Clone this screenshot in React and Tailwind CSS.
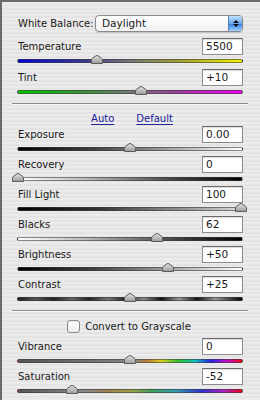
import React from "react";

const sliders1 = [
  { label: "Temperature", value: "5500", pos: 0.354, track: "bg-[linear-gradient(90deg,#0000d8_0%,#3a3a90_30%,#777_50%,#a0a030_72%,#f4f400_100%)]" },
  { label: "Tint", value: "+10", pos: 0.549, track: "bg-[linear-gradient(90deg,#00c800_0%,#3a903a_30%,#777_50%,#a03aa0_72%,#f400f4_100%)]" },
];

const sliders2 = [
  { label: "Exposure", value: "0.00", pos: 0.5, track: "bg-[linear-gradient(90deg,#000_0%,#444_35%,#bbb_75%,#fff_100%)]" },
  { label: "Recovery", value: "0", pos: 0.005, track: "bg-[linear-gradient(90deg,#fff_0%,#bbb_30%,#444_70%,#000_100%)]" },
  { label: "Fill Light", value: "100", pos: 0.99, track: "bg-[linear-gradient(90deg,#000_0%,#333_35%,#999_75%,#ddd_100%)]" },
  { label: "Blacks", value: "62", pos: 0.62, track: "bg-[linear-gradient(90deg,#fff_0%,#bbb_30%,#444_70%,#000_100%)]" },
  { label: "Brightness", value: "+50", pos: 0.668, track: "bg-[linear-gradient(90deg,#000_0%,#444_35%,#bbb_75%,#fff_100%)]" },
  { label: "Contrast", value: "+25", pos: 0.5, track: "bg-[linear-gradient(90deg,#222_0%,#555_8%,#222_16%,#666_24%,#222_32%,#777_40%,#222_48%,#888_56%,#111_64%,#999_72%,#111_80%,#999_88%,#000_100%)]" },
];

const sliders3 = [
  { label: "Vibrance", value: "0", pos: 0.5, track: "bg-[linear-gradient(90deg,#555_0%,#7a7a7a_40%,#888_52%,#c08030_58%,#d8d020_64%,#30c030_72%,#10c0c0_79%,#2020e0_86%,#c010d0_93%,#f00010_100%)]" },
  { label: "Saturation", value: "-52", pos: 0.243, track: "bg-[linear-gradient(90deg,#555_0%,#7a7a7a_20%,#888_30%,#a08050_40%,#a0a040_50%,#40a060_60%,#30a0b0_70%,#3030d0_82%,#b020c0_92%,#f00010_100%)]" },
];

function Thumb({ pos }) {
  const left = Math.round(pos * 226) - 6;
  return (
    <svg
      className="absolute top-[-4px]"
      style={{ left }}
      width="12"
      height="9"
      viewBox="0 0 12 9"
    >
      <defs>
        <linearGradient id="tg" x1="0" y1="0" x2="0" y2="1">
          <stop offset="0" stopColor="#e4e4e4" />
          <stop offset="1" stopColor="#9a9a9a" />
        </linearGradient>
      </defs>
      <path d="M0.5 8.5 L0.5 5 Q0.5 4 1.5 3.3 L5 0.8 Q6 0.2 7 0.8 L10.5 3.3 Q11.5 4 11.5 5 L11.5 8.5 Z" fill="url(#tg)" stroke="#5a5a5a" strokeWidth="1" />
    </svg>
  );
}

function Slider({ label, value, pos, track }) {
  return (
    <div className="flex h-[30px] flex-col">
      <div className="flex h-[17px] items-center justify-between">
        <span className="pl-[1px]">{label}</span>
        <div className="flex h-[17px] w-[41px] items-center border border-[#8c8c8c] border-t-[#6a6a6a] bg-white pl-[3px] text-[10.5px] shadow-[inset_0_1px_1px_rgba(0,0,0,0.15)]">
          {value}
        </div>
      </div>
      <div className="relative mt-[4px]">
        <div className={`h-[4px] w-full rounded-full border border-[#3a3a3a]/60 ${track}`} />
        <Thumb pos={pos} />
      </div>
    </div>
  );
}

function Separator() {
  return <div className="-mx-[5px] h-[2px] border-t border-[#8d8d8d] border-b border-b-[#fafafa]" />;
}

export default function App() {
  return (
    <div
      className="h-[400px] w-[260px] overflow-hidden border-l-2 border-t-2 border-[#6a6a6a] bg-[repeating-linear-gradient(0deg,#ebebeb_0px,#ebebeb_2px,#e4e4e4_2px,#e4e4e4_4px)] pl-[15px] pr-[17px] pt-[13px] text-[10px] text-[#1a1a1a]"
      style={{ fontFamily: '"DejaVu Sans", "Liberation Sans", sans-serif' }}
    >
      <div className="flex h-[17px] items-center">
        <span className="w-[78px] shrink-0 whitespace-nowrap pl-[1px]">White Balance:</span>
        <div className="flex h-[17px] flex-1 items-stretch overflow-hidden rounded-[4px] border border-[#8a8a8a] bg-[linear-gradient(180deg,#ffffff,#f0f0f0)] shadow-[0_1px_1px_rgba(0,0,0,0.15)]">
          <span className="flex flex-1 items-center pl-[6px] text-[10.5px]">Daylight</span>
          <div className="flex w-[14px] flex-col items-center justify-center gap-[1px] border-l border-[#5a7ab0] bg-[linear-gradient(180deg,#bfe0ff_0%,#6aa8f0_50%,#3c86e0_55%,#9cd0ff_100%)]">
            <svg width="6" height="3" viewBox="0 0 6 3"><path d="M0 3 L3 0 L6 3 Z" fill="#111" /></svg>
            <svg width="6" height="3" viewBox="0 0 6 3"><path d="M0 0 L3 3 L6 0 Z" fill="#111" /></svg>
          </div>
        </div>
      </div>

      <div className="mt-[6px] flex flex-col gap-[1px]">
        {sliders1.map((s) => (
          <Slider key={s.label} {...s} />
        ))}
      </div>

      <div className="mt-[4px]">
        <Separator />
      </div>

      <div className="mt-[6px] flex h-[14px] items-center justify-center gap-[22px] pl-[4px] text-[#20209a]">
        <span className="underline underline-offset-2">Auto</span>
        <span className="underline underline-offset-2">Default</span>
      </div>

      <div className="mt-[1px] flex flex-col">
        {sliders2.map((s) => (
          <Slider key={s.label} {...s} />
        ))}
      </div>

      <div className="mt-[4px]">
        <Separator />
      </div>

      <div className="mt-[6px] flex h-[16px] items-center justify-center gap-[5px] pr-[2px]">
        <div className="h-[13px] w-[13px] rounded-[3px] border border-[#8a8a8a] bg-[linear-gradient(180deg,#fff,#ececec)] shadow-[inset_0_1px_1px_rgba(0,0,0,0.1)]" />
        <span>Convert to Grayscale</span>
      </div>

      <div className="mt-[4px] flex flex-col">
        {sliders3.map((s) => (
          <Slider key={s.label} {...s} />
        ))}
      </div>
    </div>
  );
}
